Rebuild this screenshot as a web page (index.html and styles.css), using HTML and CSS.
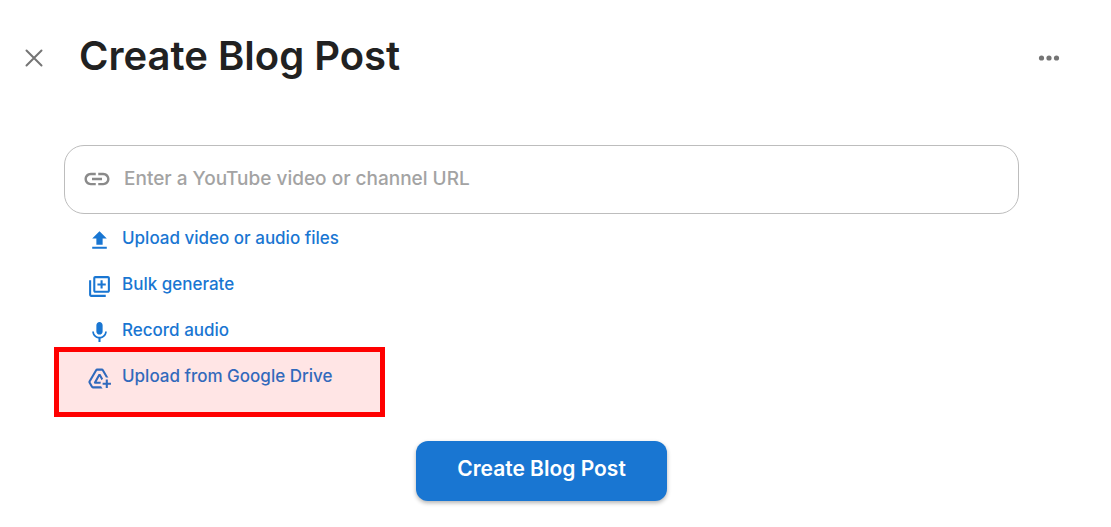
FILE: index.html
```html
<!DOCTYPE html>
<html lang="en">
<head>
    <meta charset="UTF-8">
    <meta name="viewport" content="width=device-width, initial-scale=1.0">
    <title>Create Blog Post</title>
    <link rel="stylesheet" href="styles.css">
</head>
<body>
    <header class="top-bar">
        <button class="icon-button" type="button" aria-label="Close">
            <svg width="20" height="20" viewBox="0 0 20 20"><path d="M2.500 2.500l15 15M17.500 2.500l-15 15" fill="none" stroke="currentColor" stroke-width="2" stroke-linecap="round"/></svg>
        </button>
        <h1>Create Blog Post</h1>
        <button class="icon-button" type="button" aria-label="More options">
            <svg width="22" height="20" viewBox="0 0 22 20" fill="currentColor"><circle cx="3.5" cy="10" r="2.6"/><circle cx="11" cy="10" r="2.6"/><circle cx="18.5" cy="10" r="2.6"/></svg>
        </button>
    </header>

    <main class="content">
        <label class="url-field">
            <svg width="30" height="30" viewBox="0 0 24 24" fill="currentColor"><path d="M3.9 12c0-1.71 1.39-3.1 3.1-3.1h4V7H7c-2.76 0-5 2.24-5 5s2.24 5 5 5h4v-1.9H7c-1.71 0-3.1-1.39-3.1-3.1zM8 13h8v-2H8v2zm9-6h-4v1.9h4c1.71 0 3.1 1.39 3.1 3.1s-1.39 3.1-3.1 3.1h-4V17h4c2.76 0 5-2.24 5-5s-2.24-5-5-5z"/></svg>
            <input type="text" placeholder="Enter a YouTube video or channel URL" aria-label="YouTube URL">
        </label>

        <ul class="sources">
            <li>
                <button type="button">
                    <svg viewBox="0 0 24 24"><path d="M5 20h14v-2H5v2zm4-4h6v-6h4l-7-7-7 7h4v6z"/></svg>
                    <span>Upload video or audio files</span>
                </button>
            </li>
            <li>
                <button type="button">
                    <svg viewBox="0 0 24 24"><path d="M4 6H2v14c0 1.1.9 2 2 2h14v-2H4V6zm16-4H8c-1.1 0-2 .9-2 2v12c0 1.1.9 2 2 2h12c1.1 0 2-.9 2-2V4c0-1.1-.9-2-2-2zm0 14H8V4h12v12zm-7-2h2v-3h3V9h-3V6h-2v3h-3v2h3v3z"/></svg>
                    <span>Bulk generate</span>
                </button>
            </li>
            <li>
                <button type="button">
                    <svg viewBox="0 0 24 24"><path d="M12 14c1.66 0 2.99-1.34 2.99-3L15 5c0-1.66-1.34-3-3-3S9 3.34 9 5v6c0 1.66 1.34 3 3 3zm5.3-3c0 3-2.54 5.1-5.3 5.1S6.700 14 6.700 11H5c0 3.410 2.720 6.230 6 6.720V21h2v-3.280c3.280-.480 6-3.300 6-6.720h-1.700z"/></svg>
                    <span>Record audio</span>
                </button>
            </li>
            <li class="highlighted">
                <button type="button">
                    <svg viewBox="0 0 24 24"><path d="M20 21v-3h3v-2h-3v-3h-2v3h-3v2h3v3h2zm-4.970.500H5.660c-.720 0-1.380-.380-1.740-1L1.570 16.400c-.360-.620-.350-1.380.010-2L7.920 3.490c.360-.610 1.020-.990 1.730-.990h4.700c.710 0 1.370.380 1.730.990l4.480 7.710c-.500-.130-1.020-.200-1.560-.200-.280 0-.560.020-.840.060L14.350 4.500h-4.700L3.310 15.410l2.350 4.090h7.890c.350.770.850 1.450 1.480 2zM13.340 15c-.220.630-.340 1.300-.340 2H7.250l-.730-1.270 4.580-7.980h1.800l2.530 4.420c-.560.420-1.050.930-1.440 1.510l-2-3.490L9.250 15h4.090z"/></svg>
                    <span>Upload from Google Drive</span>
                </button>
            </li>
        </ul>

        <button class="create-button" type="submit">Create Blog Post</button>
    </main>
</body>
</html>
```
FILE: styles.css
```css
* {
    box-sizing: border-box;
}
body {
    margin: 0;
    background-color: #fff;
    color: #212121;
    font-family: Inter, "Liberation Sans", sans-serif;
}
button {
    border: none;
    background: none;
    padding: 0;
    font-family: inherit;
    cursor: pointer;
}
svg {
    display: block;
    flex: none;
}
.top-bar {
    display: flex;
    align-items: center;
    padding: 32px 51px 32px 24px;
}
.icon-button {
    padding-top: 4px;
    color: #757575;
}
h1 {
    flex: 1;
    margin: 0 0 0 35px;
    font-size: 40px;
    line-height: 48px;
    font-weight: 600;
}
.content {
    display: flex;
    flex-direction: column;
    padding: 33px 92px 24px 64px;
}
.url-field {
    display: flex;
    align-items: center;
    gap: 12px;
    height: 69px;
    padding: 0 17px 2px;
    border: 1px solid #bdbdbd;
    border-radius: 20px;
    color: #8a8a8a;
}
.url-field input {
    flex: 1;
    min-width: 0;
    padding: 0;
    border: none;
    outline: none;
    font-family: inherit;
    font-size: 19px;
    font-weight: 500;
    color: #212121;
}
.url-field input::placeholder {
    color: #a3a3a3;
    opacity: 1;
}
.sources {
    list-style: none;
    margin: 1px 0 0;
    padding: 0 0 0 23px;
}
.sources li {
    position: relative;
}
.sources button {
    display: flex;
    align-items: center;
    gap: 10px;
    height: 46px;
    font-size: 17px;
    font-weight: 500;
    color: #1976d2;
}
.sources svg {
    width: 25px;
    height: 25px;
    margin-top: 4px;
    fill: currentColor;
}
/* red callout drawn over the Google Drive option */
.highlighted::after {
    content: "";
    position: absolute;
    top: -6px;
    left: -33px;
    width: 331px;
    height: 70px;
    box-sizing: border-box;
    border: 5px solid #f00;
    background-color: rgba(255, 0, 0, 0.1);
    background-clip: padding-box;
    pointer-events: none;
}
.create-button {
    align-self: center;
    height: 60px;
    margin-top: 42px;
    padding: 0 41px 5px;
    border-radius: 12px;
    background-color: #1976d2;
    box-shadow: 0 2px 4px rgba(0, 0, 0, 0.3);
    color: #fff;
    font-size: 21px;
    font-weight: 600;
}
```
